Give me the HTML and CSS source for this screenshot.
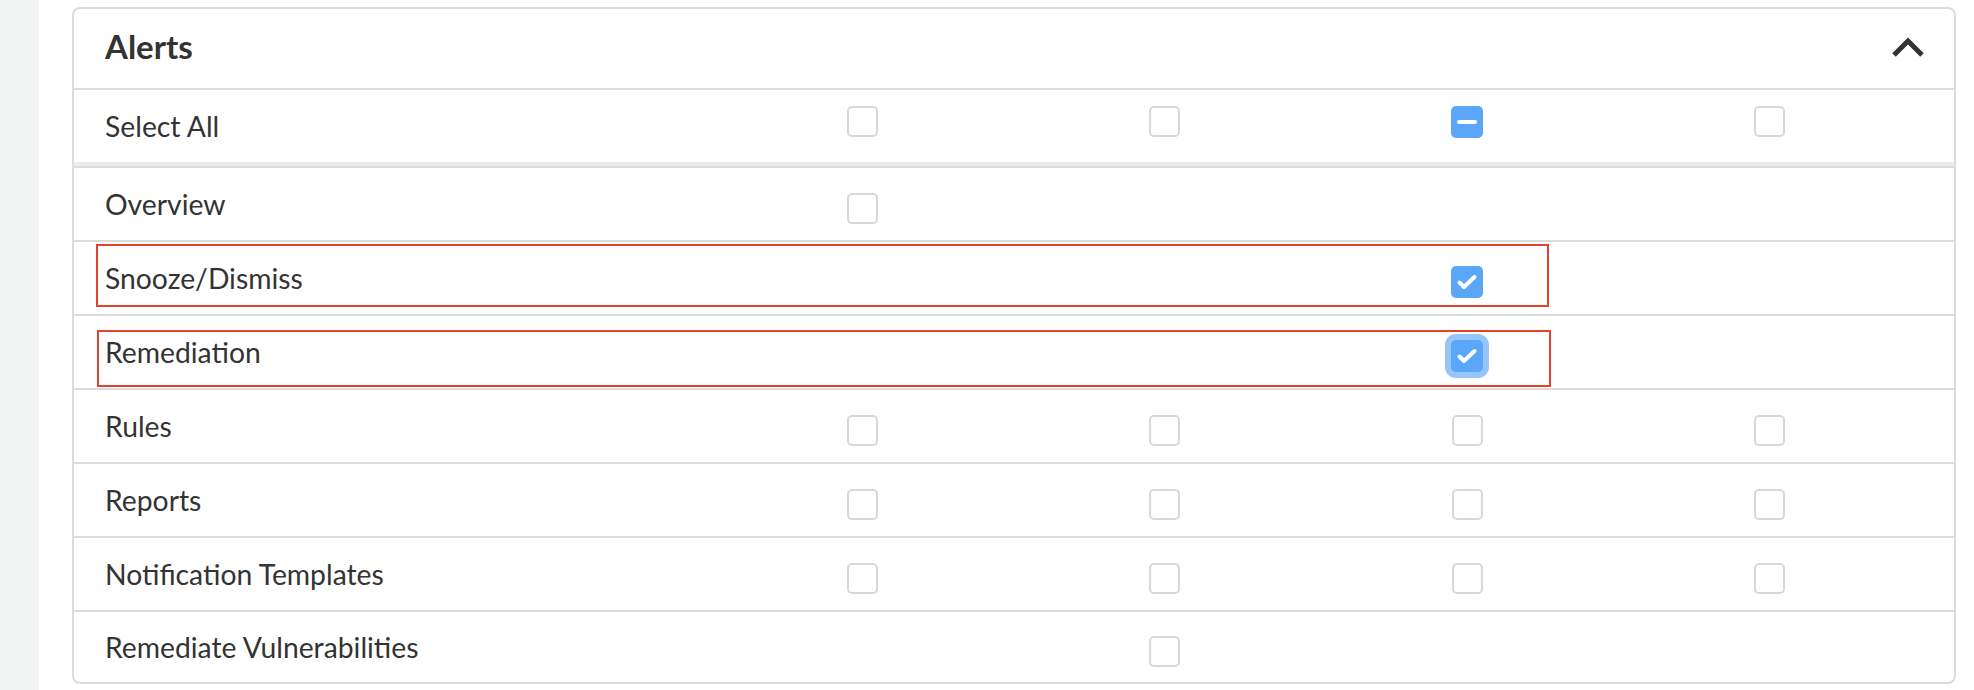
FILE: index.html
```html
<!DOCTYPE html>
<html lang="en">
<head>
<meta charset="utf-8">
<title>Alerts permissions</title>
<link rel="stylesheet" href="styles.css">
</head>
<body>
<div class="page">
  <aside class="strip"></aside>
  <main class="main">
    <section class="card">
      <header class="card-head">
        <h2 class="card-title">Alerts</h2>
        <svg class="chevron" width="34" height="22" viewBox="0 0 34 22" aria-hidden="true"><polyline points="3,19 17,5 31,19" fill="none" stroke="#333" stroke-width="5"/></svg>
      </header>

      <div class="row row-all">
        <div class="label">Select All</div>
        <div class="cell"><span class="cb"></span></div>
        <div class="cell"><span class="cb"></span></div>
        <div class="cell"><span class="cb cb-on"><svg width="32" height="32" viewBox="0 0 32 32"><line x1="8" y1="16" x2="24" y2="16" stroke="#fff" stroke-width="4" stroke-linecap="round"/></svg></span></div>
        <div class="cell"><span class="cb"></span></div>
      </div>
      <div class="band"></div>

      <div class="row">
        <div class="label">Overview</div>
        <div class="cell"><span class="cb"></span></div>
        <div class="cell"></div>
        <div class="cell"></div>
        <div class="cell"></div>
      </div>

      <div class="row">
        <div class="label">Snooze/Dismiss</div>
        <div class="cell"></div>
        <div class="cell"></div>
        <div class="cell"><span class="cb cb-on"><svg width="32" height="32" viewBox="0 0 32 32"><polyline points="8.5,16.5 13,21 23.5,11" fill="none" stroke="#fff" stroke-width="4" stroke-linecap="round" stroke-linejoin="round"/></svg></span></div>
        <div class="cell"></div>
        <div class="mark mark-a"></div>
      </div>

      <div class="row">
        <div class="label">Remediation</div>
        <div class="cell"></div>
        <div class="cell"></div>
        <div class="cell"><span class="cb cb-on cb-focus"><svg width="32" height="32" viewBox="0 0 32 32"><polyline points="8.5,16.5 13,21 23.5,11" fill="none" stroke="#fff" stroke-width="4" stroke-linecap="round" stroke-linejoin="round"/></svg></span></div>
        <div class="cell"></div>
        <div class="mark mark-b"></div>
      </div>

      <div class="row">
        <div class="label">Rules</div>
        <div class="cell"><span class="cb"></span></div>
        <div class="cell"><span class="cb"></span></div>
        <div class="cell"><span class="cb"></span></div>
        <div class="cell"><span class="cb"></span></div>
      </div>

      <div class="row">
        <div class="label">Reports</div>
        <div class="cell"><span class="cb"></span></div>
        <div class="cell"><span class="cb"></span></div>
        <div class="cell"><span class="cb"></span></div>
        <div class="cell"><span class="cb"></span></div>
      </div>

      <div class="row">
        <div class="label">Notification Templates</div>
        <div class="cell"><span class="cb"></span></div>
        <div class="cell"><span class="cb"></span></div>
        <div class="cell"><span class="cb"></span></div>
        <div class="cell"><span class="cb"></span></div>
      </div>

      <div class="row row-last">
        <div class="label">Remediate Vulnerabilities</div>
        <div class="cell"></div>
        <div class="cell"><span class="cb"></span></div>
        <div class="cell"></div>
        <div class="cell"></div>
      </div>
    </section>
  </main>
</div>
</body>
</html>
```

FILE: styles.css
```css
* { box-sizing: border-box; }

html, body {
  margin: 0;
  padding: 0;
  background: #ffffff;
  font-family: Lato, "Open Sans", Arial, sans-serif;
  color: #333333;
}

.page {
  display: flex;
  min-height: 690px;
}

.strip {
  width: 39px;
  flex: none;
  background: #f3f5f4;
}

.main {
  flex: 1;
  padding: 7px 18px 0 33px;
}

.card {
  border: 2px solid #dcdcdc;
  border-radius: 8px;
  background: #fff;
  overflow: hidden;
}

.card-head {
  height: 81px;
  border-bottom: 2px solid #dcdcdc;
  display: flex;
  align-items: center;
  justify-content: space-between;
  padding: 0 31px 0 31px;
}

.card-title {
  margin: 0;
  font-size: 33px;
  font-weight: 700;
  line-height: 1;
  color: #333;
  position: relative;
  top: -2px;
}

.chevron {
  display: block;
  margin-right: -2px;
  position: relative;
  top: -2px;
}

.row {
  position: relative;
  display: grid;
  grid-template-columns: 1fr repeat(4, 302.5px);
  align-items: center;
  height: 74px;
  padding: 0 33px 0 31px;
  border-bottom: 2px solid #dcdcdc;
}

.row-all {
  height: 72px;
  border-bottom: none;
}

.row-last {
  height: 70px;
  border-bottom: none;
}

.band {
  height: 6px;
  background: #eaedeb;
  border-bottom: 2px solid #dcdcdc;
}

.label {
  font-size: 28.3px;
  line-height: 1;
  white-space: nowrap;
}

.cell {
  display: flex;
  justify-content: center;
  align-items: center;
  height: 100%;
  padding-top: 8px;
}

.row-all .cell {
  padding-top: 0;
  padding-bottom: 9px;
}

.cb {
  display: block;
  width: 31px;
  height: 31px;
  border: 2px solid #d8d8d8;
  border-radius: 5px;
  background: #fff;
}

.cb-on {
  width: 32px;
  height: 32px;
  border: none;
  background: #5aa6f9;
  border-radius: 5px;
}

.cb-on svg {
  display: block;
}

.cb-focus {
  box-shadow: 0 0 0 6px #96c5fb;
  border-radius: 5px;
}

.mark {
  position: absolute;
  border: 2px solid #e5402b;
  pointer-events: none;
}

.mark-a {
  left: 22px;
  top: 2px;
  width: 1453px;
  height: 63px;
}

.mark-b {
  left: 23px;
  top: 14px;
  width: 1454px;
  height: 57px;
}
```
